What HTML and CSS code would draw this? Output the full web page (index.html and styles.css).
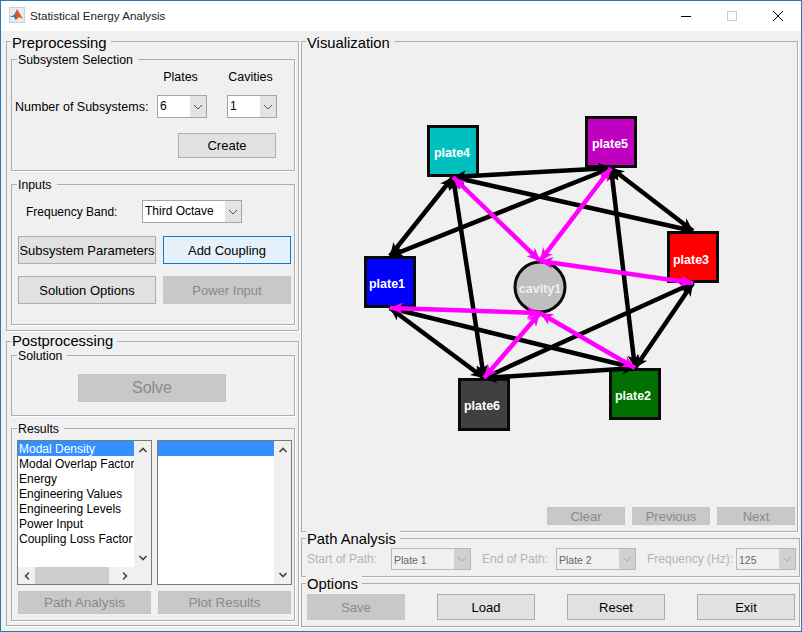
FILE: index.html
```html
<!DOCTYPE html>
<html>
<head>
  <title>Statistical Energy Analysis</title>
  <link rel="stylesheet" href="styles.css">
</head>
<body>
  <div class="window">
    <div class="titlebar">
      <svg class="app-icon" width="16" height="16" viewBox="0 0 16 16">
        <rect x="0" y="0" width="16" height="16" fill="#c9cfd6"/>
        <rect x="1" y="1" width="14" height="14" fill="#e8ecf0"/>
        <path d="M1 10 L5 8 L8 2 L11 7 L14 12 L10 10 L7 13 L5 10 Z" fill="#d9541e"/>
        <path d="M1 10 L5 8 L7 6 L7 13 L5 10 Z" fill="#3f7cb0"/>
      </svg>
      <span class="title-text">Statistical Energy Analysis</span>
      <div class="winbtns">
        <svg width="12" height="12" viewBox="0 0 12 12"><path d="M1 6.5H11" stroke="#000"/></svg>
        <svg width="12" height="12" viewBox="0 0 12 12"><rect x="1.5" y="1.5" width="9" height="9" fill="none" stroke="#ccc"/></svg>
        <svg width="12" height="12" viewBox="0 0 12 12"><path d="M1 1L11 11M11 1L1 11" stroke="#000"/></svg>
      </div>
    </div>

    <div class="main">
      <div class="col-left">
        <div class="panel preprocessing">
          <div class="title-big">Preprocessing</div>

          <div class="subpanel subsystems">
            <div class="title-small">Subsystem Selection</div>
            <div class="subsystem-grid">
              <span></span>
              <span class="col-head">Plates</span>
              <span></span>
              <span class="col-head">Cavities</span>
              <span class="label">Number of Subsystems:</span>
              <div class="combo"><span class="combo-value">6</span><span class="combo-arrow"><svg width="10" height="6" viewBox="0 0 10 6"><path d="M1 1L5 5L9 1" fill="none" stroke="#555"/></svg></span></div>
              <span></span>
              <div class="combo"><span class="combo-value">1</span><span class="combo-arrow"><svg width="10" height="6" viewBox="0 0 10 6"><path d="M1 1L5 5L9 1" fill="none" stroke="#555"/></svg></span></div>
            </div>
            <div class="create-row"><button class="btn btn-create">Create</button></div>
          </div>

          <div class="subpanel inputs">
            <div class="title-small">Inputs</div>
            <div class="freq-row">
              <span class="freq-label">Frequency Band:</span>
              <div class="combo combo-freq"><span class="combo-value">Third Octave</span><span class="combo-arrow"><svg width="10" height="6" viewBox="0 0 10 6"><path d="M1 1L5 5L9 1" fill="none" stroke="#555"/></svg></span></div>
            </div>
            <div class="inputs-grid">
              <button class="btn btn-tall">Subsystem Parameters</button>
              <button class="btn btn-tall btn-focus">Add Coupling</button>
              <button class="btn btn-tall">Solution Options</button>
              <button class="btn btn-tall" disabled>Power Input</button>
            </div>
          </div>
        </div>

        <div class="panel postprocessing">
          <div class="title-big">Postprocessing</div>

          <div class="subpanel solution">
            <div class="title-small">Solution</div>
            <div class="solve-row"><button class="btn btn-solve" disabled>Solve</button></div>
          </div>

          <div class="subpanel results">
            <div class="title-small">Results</div>
            <div class="lists">
              <div class="listbox">
                <div class="list-inner">
                  <div class="list-items">
                    <div class="item selected">Modal Density</div>
                    <div class="item">Modal Overlap Factor</div>
                    <div class="item">Energy</div>
                    <div class="item">Engineering Values</div>
                    <div class="item">Engineering Levels</div>
                    <div class="item">Power Input</div>
                    <div class="item">Coupling Loss Factor</div>
                  </div>
                  <div class="vscroll">
                    <svg width="10" height="6" viewBox="0 0 10 6"><path d="M1.5 5L5 1.5L8.5 5" fill="none" stroke="#444" stroke-width="1.6"/></svg>
                    <svg width="10" height="6" viewBox="0 0 10 6"><path d="M1.5 1L5 4.5L8.5 1" fill="none" stroke="#444" stroke-width="1.6"/></svg>
                  </div>
                </div>
                <div class="hscroll">
                  <svg width="6" height="10" viewBox="0 0 6 10"><path d="M5 1.5L1.5 5L5 8.5" fill="none" stroke="#444" stroke-width="1.6"/></svg>
                  <span class="hthumb"></span>
                  <svg class="hscroll-right" width="6" height="10" viewBox="0 0 6 10"><path d="M1 1.5L4.5 5L1 8.5" fill="none" stroke="#444" stroke-width="1.6"/></svg>
                </div>
              </div>
              <div class="listbox">
                <div class="list-inner">
                  <div class="list-items">
                    <div class="item selected">&nbsp;</div>
                  </div>
                  <div class="vscroll">
                    <svg width="10" height="6" viewBox="0 0 10 6"><path d="M1.5 5L5 1.5L8.5 5" fill="none" stroke="#444" stroke-width="1.6"/></svg>
                    <svg width="10" height="6" viewBox="0 0 10 6"><path d="M1.5 1L5 4.5L8.5 1" fill="none" stroke="#444" stroke-width="1.6"/></svg>
                  </div>
                </div>
              </div>
            </div>
            <div class="results-btns">
              <button class="btn btn-results" disabled>Path Analysis</button>
              <button class="btn btn-results" disabled>Plot Results</button>
            </div>
          </div>
        </div>
      </div>

      <div class="col-right">
        <div class="panel visualization">
          <div class="title-big">Visualization</div>
          <svg class="graph" width="496" height="448" viewBox="302 52 496 448">
            <defs>
              <marker id="head-black" markerUnits="userSpaceOnUse" markerWidth="16" markerHeight="16" refX="15" refY="8" orient="auto-start-reverse">
                <path d="M15 8L2 2L5.5 8L2 14Z" fill="#000"/>
              </marker>
              <marker id="head-pink" markerUnits="userSpaceOnUse" markerWidth="16" markerHeight="16" refX="15" refY="8" orient="auto-start-reverse">
                <path d="M15 8L2 2L5.5 8L2 14Z" fill="#ff00ff"/>
              </marker>
            </defs>

            <rect class="node" x="428.5" y="126.5" width="49" height="49" fill="#00bfbf"/>
            <rect class="node" x="586.5" y="117.5" width="49" height="49" fill="#bf00bf"/>
            <rect class="node" x="668.5" y="232.5" width="49" height="49" fill="#ff0000"/>
            <rect class="node" x="365.5" y="257.5" width="49" height="49" fill="#0000ff"/>
            <rect class="node" x="459.5" y="379.5" width="49" height="50" fill="#404040"/>
            <rect class="node" x="610.5" y="369.5" width="49" height="49" fill="#007000"/>
            <circle class="node" cx="540" cy="287" r="25" fill="#bfbfbf"/>

            <g class="edges-black">
              <line x1="453" y1="177" x2="611" y2="168"/>
              <line x1="453" y1="177" x2="390" y2="256"/>
              <line x1="453" y1="177" x2="693" y2="231"/>
              <line x1="453" y1="177" x2="484" y2="378"/>
              <line x1="611" y1="168" x2="390" y2="256"/>
              <line x1="611" y1="168" x2="693" y2="231"/>
              <line x1="611" y1="168" x2="635" y2="368"/>
              <line x1="390" y1="308" x2="484" y2="378"/>
              <line x1="390" y1="308" x2="635" y2="368"/>
              <line x1="693" y1="283" x2="484" y2="378"/>
              <line x1="693" y1="283" x2="635" y2="368"/>
              <line x1="484" y1="378" x2="635" y2="368"/>
            </g>
            <g class="edges-pink">
              <line x1="453" y1="177" x2="540" y2="261"/>
              <line x1="611" y1="168" x2="540" y2="261"/>
              <line x1="693" y1="283" x2="540" y2="261"/>
              <line x1="390" y1="308" x2="540" y2="313"/>
              <line x1="484" y1="378" x2="540" y2="313"/>
              <line x1="635" y1="368" x2="540" y2="313"/>
            </g>

            <text class="node-label" x="452" y="157">plate4</text>
            <text class="node-label" x="610" y="148">plate5</text>
            <text class="node-label" x="691" y="264">plate3</text>
            <text class="node-label" x="387" y="288">plate1</text>
            <text class="node-label" x="482" y="410">plate6</text>
            <text class="node-label" x="633" y="400">plate2</text>
            <text class="node-label cavity-label" x="540" y="293">cavity1</text>
          </svg>
          <div class="nav-row">
            <button class="btn btn-nav" disabled>Clear</button>
            <button class="btn btn-nav" disabled>Previous</button>
            <button class="btn btn-nav" disabled>Next</button>
          </div>
        </div>

        <div class="panel path-analysis">
          <div class="title-big">Path Analysis</div>
          <div class="path-row">
            <span class="path-label path-start">Start of Path:</span>
            <div class="combo combo-off combo-path"><span class="combo-value">Plate 1</span><span class="combo-arrow"><svg width="10" height="6" viewBox="0 0 10 6"><path d="M1 1L5 5L9 1" fill="none" stroke="#aaa"/></svg></span></div>
            <span class="path-label path-end">End of Path:</span>
            <div class="combo combo-off combo-path"><span class="combo-value">Plate 2</span><span class="combo-arrow"><svg width="10" height="6" viewBox="0 0 10 6"><path d="M1 1L5 5L9 1" fill="none" stroke="#aaa"/></svg></span></div>
            <span class="path-label path-freq">Frequency (Hz):</span>
            <div class="combo combo-off combo-hz"><span class="combo-value">125</span><span class="combo-arrow"><svg width="10" height="6" viewBox="0 0 10 6"><path d="M1 1L5 5L9 1" fill="none" stroke="#aaa"/></svg></span></div>
          </div>
        </div>

        <div class="panel options">
          <div class="title-big">Options</div>
          <div class="options-row">
            <button class="btn btn-option" disabled>Save</button>
            <button class="btn btn-option">Load</button>
            <button class="btn btn-option">Reset</button>
            <button class="btn btn-option">Exit</button>
          </div>
        </div>
      </div>
    </div>
  </div>
</body>
</html>
```

FILE: styles.css
```css
* {
  box-sizing: border-box;
}

html, body {
  margin: 0;
  padding: 0;
}

body {
  font-family: "Liberation Sans", Arial, sans-serif;
  font-size: 12.5px;
  color: #000;
}

.window {
  width: 802px;
  height: 632px;
  border: 1px solid #2b78b0;
  background-color: #f0f0f0;
  overflow: hidden;
}

.titlebar {
  height: 30px;
  background-color: #fff;
  display: flex;
  align-items: center;
  padding-left: 8px;
}

.app-icon {
  margin: 0 5px 2px 0;
}

.title-text {
  color: #222;
  font-size: 11.6px;
  margin-bottom: 2px;
}

.winbtns {
  margin-left: auto;
  display: flex;
  gap: 34px;
  padding-right: 17px;
}

.main {
  display: flex;
  padding: 10px 0 0 5px;
}

.col-left {
  width: 293px;
}

.col-right {
  width: 499px;
  margin-left: 2px;
}

.panel, .subpanel {
  border: 1px solid #aeaeae;
  box-shadow: 1px 1px 0 #fff;
}

.title-big, .title-small {
  width: fit-content;
  background-color: #f0f0f0;
  white-space: nowrap;
}

.title-big {
  font-size: 14.8px;
  line-height: 18px;
  margin: -8px 0 0 4px;
  padding: 0 4px 0 1px;
}

.title-small {
  font-size: 12.3px;
  line-height: 14px;
  margin: -7px 0 0 5px;
  padding: 0 5px 0 1px;
}

/* left column */
.preprocessing {
  height: 290px;
  padding: 0 2px 0 4px;
}

.postprocessing {
  height: 285px;
  margin-top: 10px;
  padding: 0 2px 0 4px;
}

.preprocessing .title-big, .postprocessing .title-big {
  margin-left: 0;
}

.postprocessing .title-big {
  line-height: 15px;
}

.subpanel {
  width: 284px;
}

.subsystems {
  height: 112px;
  margin-top: 7px;
}

.inputs {
  height: 141px;
  margin-top: 13px;
}

.solution {
  height: 61px;
  margin-top: 6px;
}

.results {
  height: 193px;
  margin-top: 12px;
}

.subsystem-grid {
  display: grid;
  grid-template-columns: 142px 50px 20px 50px;
  grid-template-rows: 16px 23px;
  row-gap: 10px;
  padding: 2px 0 0 3px;
  align-items: center;
}

.col-head {
  text-align: center;
  padding-right: 3px;
  white-space: nowrap;
}

.label {
  white-space: nowrap;
  padding-top: 1px;
}

.combo {
  display: flex;
  height: 23px;
  border: 1px solid #a5a5a5;
  background-color: #fff;
}

.combo-value {
  flex: 1;
  padding-left: 2px;
  line-height: 20px;
  font-size: 12px;
  white-space: nowrap;
  overflow: hidden;
}

.combo-arrow {
  width: 16px;
  background-color: #e3e3e3;
  display: flex;
  align-items: center;
  justify-content: center;
}

.create-row {
  display: flex;
  justify-content: flex-end;
  margin-top: 15px;
  padding-right: 18px;
}

.btn {
  font-family: "Liberation Sans", Arial, sans-serif;
  font-size: 13px;
  color: #000;
  background-color: #e1e1e1;
  border: 1px solid #adadad;
  padding: 0;
  white-space: nowrap;
}

.btn:disabled {
  background-color: #c8c8c8;
  border-color: #c4c4c4;
  color: #8a8a8a;
}

.btn-create {
  width: 98px;
  height: 25px;
}

.freq-row {
  display: flex;
  margin-top: 8px;
  padding-left: 14px;
  align-items: center;
}

.freq-label {
  width: 116px;
  font-size: 12px;
  white-space: nowrap;
  padding-top: 1px;
}

.combo-freq {
  width: 100px;
}

.inputs-grid {
  display: grid;
  grid-template-columns: 138px 128px;
  grid-auto-rows: 28px;
  gap: 12px 7px;
  margin: 13px 0 0 6px;
}

.btn-focus {
  background-color: #e5f1fb;
  border-color: #0a78c8;
}

.solve-row {
  display: flex;
  justify-content: center;
  margin-top: 11px;
  margin-left: -2px;
}

.btn.btn-solve {
  width: 148px;
  height: 28px;
  font-size: 16px;
}

.lists {
  display: flex;
  gap: 5px;
  margin: 4px 0 0 5px;
}

.listbox {
  width: 135px;
  height: 145px;
  border: 1px solid #7a7a7a;
  background-color: #fff;
  display: flex;
  flex-direction: column;
}

.list-inner {
  flex: 1;
  display: flex;
  min-height: 0;
}

.list-items {
  flex: 1;
  min-width: 0;
  overflow: hidden;
  font-size: 12px;
}

.item {
  height: 15px;
  line-height: 17px;
  padding-left: 1px;
  white-space: nowrap;
  overflow: hidden;
}

.item.selected {
  background-color: #3390ff;
  color: #fff;
}

.vscroll {
  width: 17px;
  background-color: #f0f0f0;
  display: flex;
  flex-direction: column;
  justify-content: space-between;
  align-items: center;
  padding: 6px 0;
}

.hscroll {
  height: 17px;
  background-color: #f0f0f0;
  display: flex;
  align-items: center;
  padding: 0 23px 0 6px;
  gap: 5px;
}

.hscroll-right {
  margin-left: auto;
}

.hthumb {
  width: 74px;
  height: 17px;
  background-color: #cdcdcd;
}

.results-btns {
  display: flex;
  gap: 7px;
  margin: 6px 0 0 6px;
}

.btn.btn-results {
  width: 133px;
  height: 23px;
  font-size: 13.5px;
}

/* right column */
.visualization {
  width: 497px;
  height: 491px;
}

.graph {
  display: block;
}

.nav-row {
  display: flex;
  justify-content: flex-end;
  gap: 7px;
  margin-top: 7px;
  padding-right: 2px;
}

.btn-nav {
  width: 78px;
  height: 18px;
}

.node {
  stroke: #0a0a0a;
  stroke-width: 3;
}

.edges-black line {
  stroke: #000;
  stroke-width: 4.5;
  marker-start: url(#head-black);
  marker-end: url(#head-black);
}

.edges-pink line {
  stroke: #ff00ff;
  stroke-width: 4.5;
  marker-start: url(#head-pink);
  marker-end: url(#head-pink);
}

.node-label {
  font-family: "Liberation Sans", Arial, sans-serif;
  font-size: 12.5px;
  font-weight: bold;
  fill: #fff;
  text-anchor: middle;
}

.cavity-label {
  fill: #efefef;
}

.path-analysis {
  height: 39px;
  margin-top: 6px;
}

.path-analysis .title-big, .options .title-big {
  margin-top: -9px;
}

.path-row {
  display: flex;
  align-items: center;
  height: 22px;
}

.path-label {
  color: #b4b4b4;
  font-size: 12px;
  white-space: nowrap;
}

.path-start {
  width: 84px;
  margin-left: 5px;
}

.path-end {
  width: 74px;
  margin-left: 11px;
}

.path-freq {
  width: 89px;
  margin-left: 11px;
}

.combo-off {
  background-color: #f0f0f0;
  border-color: #b8b8b8;
  height: 22px;
}

.combo-off .combo-value {
  font-size: 10.5px;
  color: #666;
  line-height: 23px;
}

.combo-off .combo-arrow {
  background-color: #d0d0d0;
}

.combo-path {
  width: 80px;
}

.combo-hz {
  width: 60px;
}

.options {
  height: 44px;
  margin-top: 6px;
}

.options-row {
  display: flex;
  gap: 32px;
  margin: 1px 0 0 5px;
}

.btn-option {
  width: 98px;
  height: 26px;
}
```
